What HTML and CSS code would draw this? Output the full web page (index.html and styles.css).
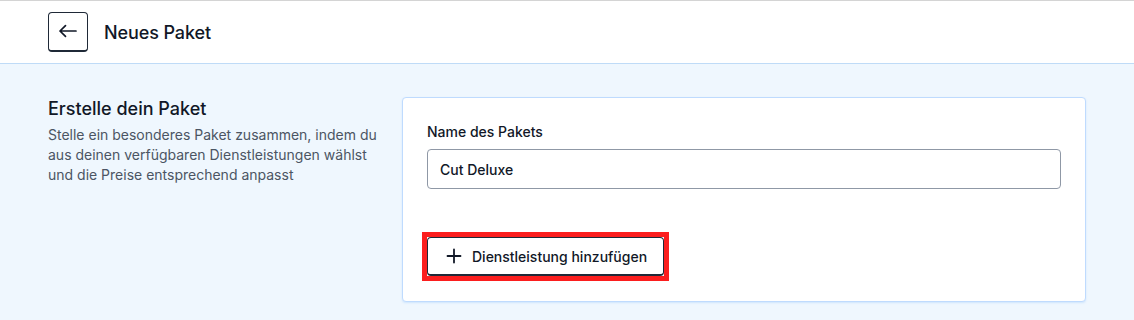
FILE: index.html
```html
<!DOCTYPE html>
<html lang="de">
<head>
<meta charset="utf-8">
<title>Neues Paket</title>
<link rel="stylesheet" href="styles.css">
</head>
<body>
<header class="topbar">
  <button class="back-btn" type="button" aria-label="Zurück">
    <svg width="20" height="20" viewBox="0 0 20 20" fill="none" stroke="#111827" stroke-width="1.7" stroke-linecap="round" stroke-linejoin="round"><path d="M2 10h16M7.5 4.6 2 10l5.5 5.4"/></svg>
  </button>
  <h1 class="page-title">Neues Paket</h1>
</header>
<main class="main">
  <section class="intro">
    <h2 class="intro-title">Erstelle dein Paket</h2>
    <p class="intro-text">Stelle ein besonderes Paket zusammen, indem du aus deinen verfügbaren Dienstleistungen wählst und die Preise entsprechend anpasst</p>
  </section>
  <section class="card">
    <label class="field-label" for="name">Name des Pakets</label>
    <input class="field-input" id="name" type="text" value="Cut Deluxe">
    <div class="actions">
      <button class="add-btn" type="button">
        <svg width="20" height="20" viewBox="0 0 20 20" fill="none" stroke="#111827" stroke-width="1.8" stroke-linecap="round"><path d="M10 3.5v13M3.5 10h13"/></svg>
        <span>Dienstleistung hinzufügen</span>
      </button>
    </div>
  </section>
</main>
</body>
</html>
```

FILE: styles.css
```css
* { box-sizing: border-box; }
html, body { margin: 0; padding: 0; }
body {
  font-family: Inter, "Noto Sans", sans-serif;
  color: #111827;
  background: #eff7fe;
  height: 320px;
  overflow: hidden;
  border-top: 1px solid #d4d4d4;
}
.topbar {
  height: 63px;
  background: #ffffff;
  border-bottom: 1px solid #bfdbf7;
  display: flex;
  align-items: center;
  gap: 16px;
  padding: 0 48px;
}
.back-btn {
  width: 40px;
  height: 40px;
  padding: 0;
  display: flex;
  align-items: center;
  justify-content: center;
  background: #fff;
  border: 1px solid #1f2937;
  border-bottom-width: 2px;
  border-radius: 4px;
  margin-top: -1px;
}
.page-title {
  margin: 0;
  font-size: 18px;
  font-weight: 500;
  color: #111827;
  letter-spacing: -0.1px;
}
.main {
  display: grid;
  grid-template-columns: 330px 1fr;
  gap: 24px;
  padding: 33px 48px 0;
}
.intro-title {
  margin: 0;
  font-size: 18px;
  font-weight: 500;
  line-height: 24px;
  color: #111827;
}
.intro-text {
  margin: 4px 0 0;
  font-size: 14px;
  line-height: 20px;
  color: #4b5563;
}
.card {
  background: #fff;
  border: 1px solid #bfdbfe;
  border-radius: 4px;
  box-shadow: 0 1px 2px rgba(147, 197, 253, 0.35);
  padding: 24px 24px 25px;
  display: flex;
  flex-direction: column;
}
.field-label {
  font-size: 14px;
  font-weight: 500;
  line-height: 20px;
  color: #111827;
}
.field-input {
  margin-top: 7px;
  height: 40px;
  width: 100%;
  border: 1px solid #8f98a6;
  border-radius: 4px;
  padding: 0 12px;
  font-family: inherit;
  font-size: 14px;
  font-weight: 500;
  color: #111827;
  background: #fff;
}
.actions {
  margin-top: 48px;
  display: flex;
}
.add-btn {
  position: relative;
  height: 39px;
  display: flex;
  align-items: center;
  gap: 8px;
  padding: 0 16px;
  background: #fff;
  border: 1px solid #1f2937;
  border-bottom-width: 2px;
  border-radius: 4px;
  font-family: inherit;
  font-size: 14px;
  font-weight: 500;
  color: #111827;
}
.add-btn::after {
  content: "";
  position: absolute;
  top: -6px;
  left: -6px;
  right: -6px;
  bottom: -7px;
  border: 5px solid #fb1e1e;
  pointer-events: none;
}
```
